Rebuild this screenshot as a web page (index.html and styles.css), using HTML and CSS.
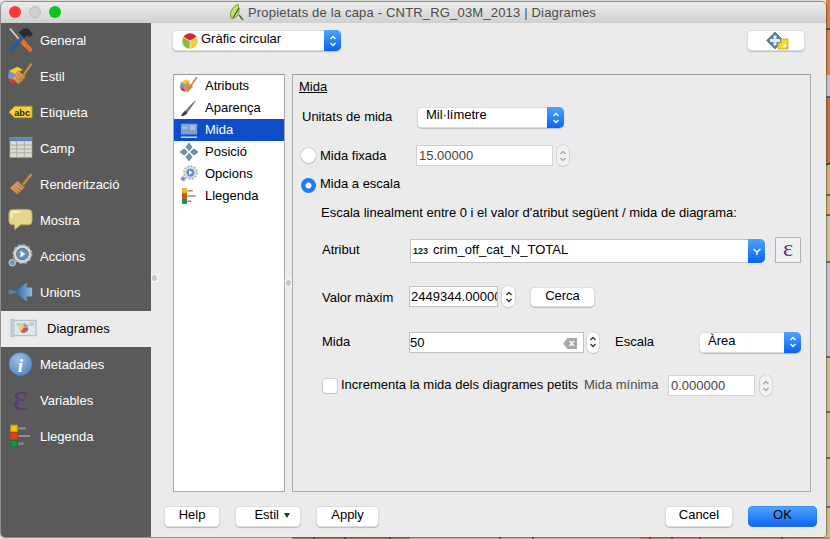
FILE: index.html
```html
<!DOCTYPE html>
<html lang="ca">
<head>
<meta charset="utf-8">
<title>Propietats de la capa</title>
<link rel="stylesheet" href="styles.css">
</head>
<body>
<svg class="defs" width="0" height="0" aria-hidden="true">
  <defs>
    <linearGradient id="wood" x1="0" y1="0" x2="1" y2="1"><stop offset="0" stop-color="#e9b878"/><stop offset="1" stop-color="#b87a3a"/></linearGradient>
    <radialGradient id="infoG" cx=".4" cy=".3" r=".8"><stop offset="0" stop-color="#9dc0e6"/><stop offset="1" stop-color="#4f83bd"/></radialGradient>
    <linearGradient id="arrowG" x1="0" y1="0" x2="1" y2="0"><stop offset="0" stop-color="#2f659f"/><stop offset="1" stop-color="#8fb6e0"/></linearGradient>
    <symbol id="brush" viewBox="0 0 24 24">
      <path d="M15 12 22 3" stroke="#c98a3a" stroke-width="2.4" stroke-linecap="round"/>
      <path d="M9 9 16 15 9 22 2 16Z" fill="url(#wood)" stroke="#9a6a30" stroke-width=".6"/>
      <path d="M6 13l6 5M4.500 15l6 5M8 11l6 5" stroke="#a26d30" stroke-width=".7"/>
    </symbol>
    <symbol id="style" viewBox="0 0 24 24">
      <path d="M1 7 9 3 14 6 5 12Z" fill="#f3c92f"/>
      <path d="M1 7 8 11 5 17 0 14Z" fill="#6f9ad0"/>
      <path d="M0 14 6 16 8 20 2 18Z" fill="#d33b2f"/>
      <path d="M15 11 22 1" stroke="#c98a3a" stroke-width="2.2" stroke-linecap="round"/>
      <path d="M10 7 17 13 10 20 4 14Z" fill="url(#wood)" stroke="#9a6a30" stroke-width=".6"/>
      <path d="M7 12l5 5M9 10l5 5" stroke="#a26d30" stroke-width=".7"/>
    </symbol>
    <symbol id="gear" viewBox="0 0 26 24">
      <circle cx="15" cy="10" r="8" fill="none" stroke="#d8d8d8" stroke-width="3"/>
      <circle cx="15" cy="10" r="9.500" fill="none" stroke="#aaa" stroke-width="2" stroke-dasharray="2.500 2.500"/>
      <circle cx="15" cy="10" r="6" fill="#5f8fc4"/>
      <path d="M13 6.500v7l5-3.500Z" fill="#fff"/>
      <circle cx="4.500" cy="19" r="3.200" fill="#6f94bd" stroke="#bbb" stroke-width="1.400"/>
    </symbol>
    <symbol id="legend" viewBox="0 0 20 24">
      <rect x="1" y="2" width="6" height="6" fill="#f7c400" stroke="#c99a20" stroke-width=".8"/>
      <rect x="1" y="9" width="6" height="6" fill="#e8430c" stroke="#b8400f" stroke-width=".8"/>
      <rect x="1" y="16" width="6" height="6" fill="#0d9b45" stroke="#0f6e35" stroke-width=".8"/>
      <path d="M8 5h7M8 12h11M8 19h5" stroke="#8f8f8f" stroke-width="2"/>
    </symbol>
    <symbol id="mapicon" viewBox="0 0 28 20">
      <rect x="3" y="2" width="24" height="16" fill="#dfe6ea" stroke="#a9b7c2"/>
      <rect x="1" y="1" width="3" height="18" fill="#c9d3da" stroke="#a9b7c2" stroke-width=".7"/>
      <path d="M7 5h6v3H7ZM20 4h5v4h-5Z" fill="#bcd0c2"/>
      <circle cx="14" cy="10" r="5" fill="#e9d17a"/>
      <path d="M14 10V5a5 5 0 0 1 5 5Z" fill="#8aa3d0"/>
      <path d="M14 10h5a5 5 0 0 1-8 4Z" fill="#d25656"/>
    </symbol>
    <symbol id="move" viewBox="0 0 20 20">
      <g fill="#6f8fa8" stroke="#3f6684" stroke-width=".5">
        <path d="M10 0 13.500 4.500 10 8.500 6.500 4.500Z"/>
        <path d="M10 11.500 13.500 15.500 10 20 6.500 15.500Z"/>
        <path d="M0 10 4.500 6.500 8.500 10 4.500 13.500Z"/>
        <path d="M11.500 10 15.500 6.500 20 10 15.500 13.500Z"/>
      </g>
    </symbol>
    <symbol id="updown" viewBox="0 0 12 20">
      <path d="M3.500 8 6 5.500 8.500 8M3.500 12 6 14.500 8.500 12" fill="none" stroke="currentColor" stroke-width="1.300"/>
    </symbol>
  </defs>
</svg>

<svg class="wallpaper" viewBox="0 0 830 539" aria-hidden="true">
  <rect width="830" height="539" fill="#e4e4e4"/>
  <rect x="826" width="4" height="75" fill="#e07f36"/>
  <rect x="826" y="75" width="4" height="22" fill="#c4c4c4"/>
  <rect x="826" y="97" width="4" height="68" fill="#c9702f"/>
  <rect x="826" y="165" width="4" height="50" fill="#cdb56a"/>
  <rect x="826" y="215" width="4" height="47" fill="#c9c68d"/>
  <rect x="826" y="262" width="4" height="95" fill="#c4c4c4"/>
  <rect x="826" y="357" width="4" height="182" fill="#c5c285"/>
  <path d="M826 29h4M826 97h4M826 165l4-2M826 195h4M826 215h4M826 262h4M826 357h4M826 412h4M826 458h4M826 507h4" stroke="#111"/>
  <rect x="292" y="537" width="118" height="2" fill="#9c8646"/>
  <rect x="410" y="537" width="230" height="2" fill="#bdb99a"/>
  <rect x="640" y="537" width="190" height="2" fill="#a59a58"/>
  <path d="M314 537v2M345 537v2M390 537v2M500 537v2M533 537v2M650 537v2M672 537v2M700 537v2M782 537v2" stroke="#111"/>
</svg>

<div class="window">
  <header class="titlebar">
    <div class="lights"><span class="light red"></span><span class="light mute"></span><span class="light green"></span></div>
    <svg class="qgis" viewBox="0 0 16 18" width="16" height="18" aria-hidden="true">
      <path d="M3 15C1 9 5 4 10 1c1 4 2 9-1 12-2 2-4 3-6 2Z" fill="#c3dc6a" stroke="#5b8a24" stroke-width=".8"/>
      <path d="M5 15 11 5M11 12l4 5" stroke="#2f6a1c" stroke-width="1.300" fill="none"/>
    </svg>
    <span class="title">Propietats de la capa - CNTR_RG_03M_2013 | Diagrames</span>
  </header>
  <div class="content">
    <nav class="sidebar">
      <div class="nav-item"><svg class="nav-icon" viewBox="0 0 26 26" aria-hidden="true">
        <path d="M2 1 18 20" stroke="#ddd" stroke-width="1.500"/>
        <path d="M15 14 23 23" stroke="#e8701a" stroke-width="4.500" stroke-linecap="round"/>
        <path d="M3 24 17 8" stroke="#2d5c96" stroke-width="4" stroke-linecap="round"/>
        <path d="M11 5 16 1h5l5 6-3 3-3-2-3 3-4-4Z" fill="#2b2b2b"/>
      </svg><span>General</span></div>
      <div class="nav-item"><svg class="nav-icon"><use href="#style"/></svg><span>Estil</span></div>
      <div class="nav-item"><svg class="nav-icon" viewBox="0 0 26 26" aria-hidden="true">
        <path d="M1 13 7 7H25V19H7Z" fill="#f3d43a" stroke="#b2932a"/>
        <text x="6.500" y="17" class="abc">abc</text>
      </svg><span>Etiqueta</span></div>
      <div class="nav-item"><svg class="nav-icon" viewBox="0 0 26 26" aria-hidden="true">
        <rect x="2" y="2" width="23" height="21" fill="#dcdcd4" stroke="#9a9a92" stroke-width=".6"/>
        <rect x="2" y="2" width="23" height="4" fill="#5f85b5"/>
        <path d="M2 10h23M2 14h23M2 18h23M9 6v17M17 6v17" stroke="#a8a8a0"/>
      </svg><span>Camp</span></div>
      <div class="nav-item"><svg class="nav-icon"><use href="#brush"/></svg><span>Renderització</span></div>
      <div class="nav-item"><svg class="nav-icon" viewBox="0 0 26 26" aria-hidden="true">
        <path d="M5 2H21Q25 2 25 6V14Q25 18 21 18H13L7 23V18H5Q1 18 1 14V6Q1 2 5 2Z" fill="#e4d78c" stroke="#bfa85c"/>
        <path d="M4 11V6Q4 4.500 6 4.500H13" stroke="#fff" stroke-width="1.200" fill="none"/>
      </svg><span>Mostra</span></div>
      <div class="nav-item"><svg class="nav-icon"><use href="#gear"/></svg><span>Accions</span></div>
      <div class="nav-item"><svg class="nav-icon" viewBox="0 0 28 26" aria-hidden="true">
        <circle cx="3" cy="13" r="2.800" fill="#4a7fb5"/>
        <path d="M5 13h5" stroke="#6f9ac8" stroke-width="1.500"/>
        <path d="M8 13 21 2V8H27V18H21V24Z" fill="url(#arrowG)"/>
      </svg><span>Unions</span></div>
      <div class="nav-item active"><svg class="nav-icon"><use href="#mapicon"/></svg><span>Diagrames</span></div>
      <div class="nav-item"><svg class="nav-icon" viewBox="0 0 26 26" aria-hidden="true">
        <circle cx="13" cy="13" r="12" fill="url(#infoG)" stroke="#4473a8" stroke-width=".6"/>
        <text x="13" y="21" class="info-i">i</text>
      </svg><span>Metadades</span></div>
      <div class="nav-item"><span class="eps eps-nav">ε</span><span>Variables</span></div>
      <div class="nav-item"><svg class="nav-icon"><use href="#legend"/></svg><span>Llegenda</span></div>
    </nav>

    <main class="main">
      <div class="toprow">
        <div class="combo combo-type">
          <svg class="pie" viewBox="1 1 14 14" aria-hidden="true">
            <path d="M8 8 2 4.500A7 7 0 0 1 14 4.500Z" fill="#d8232a" stroke="#fff" stroke-width=".4"/>
            <path d="M8 8 14 4.500A7 7 0 0 1 8 15Z" fill="#f3d03c" stroke="#fff" stroke-width=".4"/>
            <path d="M8 8V15A7 7 0 0 1 2 4.500Z" fill="#8db83e" stroke="#fff" stroke-width=".4"/>
          </svg>
          <span class="combo-text up">Gràfic circular</span>
          <span class="stepper"><svg><use href="#updown"/></svg></span>
        </div>
        <button class="btn btn-tool" type="button">
          <svg viewBox="0 0 24 20" width="24" height="20" aria-hidden="true">
            <path d="M9 1 17.500 9.500 9 18 .5 9.500Z" fill="#5d7f9b" stroke="#3f6684" stroke-width=".6"/>
            <path d="M7.500 4.500h3v3.500h3.500v3h-3.500v3.500h-3v-3.500H4v-3h3.500Z" fill="#e4edf3"/>
            <path d="M12 12h3V8h7v10H12Z" fill="#f4d832" stroke="#c9a820" stroke-width=".8"/>
            <rect x="17.500" y="13.500" width="2.500" height="2.500" fill="#fff"/>
          </svg>
        </button>
      </div>

      <div class="workspace">
        <ul class="list">
          <li class="list-item"><svg class="list-icon"><use href="#style"/></svg>Atributs</li>
          <li class="list-item"><svg class="list-icon" viewBox="0 0 20 20" aria-hidden="true">
            <path d="M18 1C14 4 9 9 6 13L3 16C2 18 1 19 1 19 4 19 7 18 9 14 12 10 16 5 18 1Z" fill="#777"/>
            <path d="M6 13C4 14 3 16 1 19 4 19 7 18 8 15Z" fill="#444"/>
          </svg>Aparença</li>
          <li class="list-item selected"><svg class="list-icon" viewBox="0 0 20 20" aria-hidden="true">
            <rect x="1" y="3" width="18" height="12" fill="#7f9fd0"/>
            <path d="M3 6h5v3H3ZM11 5h6v5h-6Z" fill="#a9bfe2"/>
            <path d="M1 18h18" stroke="#c9d6ea" stroke-width="1.500"/>
          </svg>Mida</li>
          <li class="list-item"><svg class="list-icon"><use href="#move"/></svg>Posició</li>
          <li class="list-item"><svg class="list-icon"><use href="#gear"/></svg>Opcions</li>
          <li class="list-item"><svg class="list-icon"><use href="#legend"/></svg>Llegenda</li>
        </ul>
        <div class="handle"><span class="dot"></span></div>
        <section class="panel">
          <div class="group-title">Mida</div>

          <div class="row row-units">
            <label class="lbl lift2 w-units">Unitats de mida</label>
            <div class="combo combo-units"><span class="combo-text up2">Mil·límetre</span><span class="stepper"><svg><use href="#updown"/></svg></span></div>
          </div>

          <div class="row row-fixed">
            <span class="radio"></span>
            <label class="lbl w-fixed">Mida fixada</label>
            <div class="field dim w-137">15.00000</div>
            <span class="spin dim-spin"><svg><use href="#updown"/></svg></span>
          </div>

          <div class="row row-scaled">
            <span class="radio on"></span>
            <label class="lbl lift3">Mida a escala</label>
          </div>

          <div class="desc">Escala linealment entre 0 i el valor d'atribut següent / mida de diagrama:</div>

          <div class="row row-attr">
            <label class="lbl lift2 w-attr">Atribut</label>
            <div class="combo combo-attr">
              <span class="num">123</span><span class="attr-name">crim_off_cat_N_TOTAL</span>
              <span class="stepper stepper-down"><svg viewBox="0 0 12 12" width="12" height="12" aria-hidden="true"><path d="M2.500 4 6 7 9.500 4M6 7v3" fill="none" stroke="#fff" stroke-width="1.400"/></svg></span>
            </div>
            <button class="eps-btn" type="button"><span class="eps">ε</span></button>
          </div>

          <div class="row row-max">
            <label class="lbl drop1 w-max">Valor màxim</label>
            <div class="field w-89 clip"><span class="clip-text">2449344.00000</span></div>
            <span class="spin w-13"><svg><use href="#updown"/></svg></span>
            <button class="btn btn-search" type="button">Cerca</button>
          </div>

          <div class="row row-size">
            <label class="lbl lift1 w-max">Mida</label>
            <div class="field w-175">50
              <svg class="clear" viewBox="0 0 14 11" width="14" height="11" aria-hidden="true">
                <path d="M0 5.500 4.500 0H14V11H4.500Z" fill="#a8a8a8"/>
                <path d="M6.500 3 11 8M11 3 6.500 8" stroke="#fff" stroke-width="1.300"/>
              </svg>
            </div>
            <span class="spin spin-gap3"><svg><use href="#updown"/></svg></span>
            <label class="lbl lift1 w-scale">Escala</label>
            <div class="combo combo-scale"><span class="combo-text">Àrea</span><span class="stepper"><svg><use href="#updown"/></svg></span></div>
          </div>

          <div class="row row-inc">
            <span class="check"></span>
            <label class="lbl lift3 w-inc">Incrementa la mida dels diagrames petits</label>
            <label class="lbl lift3 w-min grey">Mida mínima</label>
            <div class="field dim w-87">0.000000</div>
            <span class="spin dim-spin spin-gap5"><svg><use href="#updown"/></svg></span>
          </div>
        </section>
      </div>

      <footer class="footer">
        <button class="btn btn-help" type="button">Help</button>
        <button class="btn btn-style" type="button">Estil <i class="caret"></i></button>
        <button class="btn btn-apply" type="button">Apply</button>
        <button class="btn btn-cancel" type="button">Cancel</button>
        <button class="btn btn-ok" type="button">OK</button>
      </footer>
    </main>
    <div class="handle handle-side"><span class="dot"></span></div>
  </div>
</div>
</body>
</html>
```
FILE: styles.css
```css
* { box-sizing: border-box; }
html, body { margin: 0; height: 100%; }
body {
  position: relative;
  width: 830px;
  height: 539px;
  overflow: hidden;
  font-family: "Liberation Sans", Arial, sans-serif;
  font-size: 13px;
  color: #000;
}
.defs { position: absolute; }
.wallpaper { position: absolute; left: 0; top: 0; width: 830px; height: 539px; }

.window {
  position: absolute;
  left: 1px;
  top: 2px;
  width: 825px;
  height: 535px;
  display: flex;
  flex-direction: column;
  background: #ebebeb;
  border-radius: 5px 5px 4px 4px;
  overflow: hidden;
  box-shadow: 0 0 1px 1px rgba(60, 60, 60, .55);
}

.titlebar {
  position: relative;
  height: 21px;
  flex: none;
  display: flex;
  align-items: center;
  justify-content: center;
  gap: 4px;
  padding-right: 3px;
  background: linear-gradient(#ececec, #d2d2d2);
  border-bottom: 1px solid #cfcfcf;
}
.lights { position: absolute; left: 8px; top: 4px; display: flex; gap: 8px; }
.light { width: 12px; height: 12px; border-radius: 50%; }
.red { background: #fc3b39; }
.mute { background: #cfcfcf; border: 1px solid #bdbdbd; }
.green { background: #0cc71f; }
.qgis { flex: none; }
.title { color: #4c4c4c; font-size: 13px; letter-spacing: .18px; }

.content { flex: 1; display: flex; position: relative; min-height: 0; }
.sidebar { width: 150px; flex: none; background: #5a5a5a; }
.nav-item {
  height: 36px;
  display: flex;
  align-items: center;
  gap: 7px;
  padding-left: 7px;
  padding-bottom: 2px;
  color: #fff;
}
.nav-icon { width: 25px; height: 26px; flex: none; }
.nav-item.active { background: #ebebeb; color: #000; padding-left: 9px; gap: 10px; }
.nav-item.active .nav-icon { width: 27px; height: 20px; }
.abc { font: bold 9.500px "Liberation Sans", Arial, sans-serif; fill: #222; }
.info-i { font: italic bold 20px "Liberation Serif", serif; fill: #fff; text-anchor: middle; }
.eps {
  font-family: "Liberation Serif", serif;
  color: #5a3a78;
  line-height: 1;
}
.eps-nav { width: 25px; height: 26px; line-height: 20px; flex: none; font-size: 38px; text-align: center; }

.main { flex: 1; min-width: 0; padding: 7px 9px 0 13px; display: flex; flex-direction: column; }
.toprow { display: flex; justify-content: space-between; height: 21px; margin: 0 12px 0 8px; flex: none; }
.workspace { display: flex; height: 418px; margin: 23px 6px 0 9px; flex: none; }

.combo {
  position: relative;
  display: flex;
  align-items: center;
  height: 21px;
  background: #fff;
  border-radius: 5px;
  box-shadow: inset 0 0 0 .5px #bdbdbd, 0 1px 1px rgba(0, 0, 0, .2);
}
.combo-text { padding-bottom: 3px; }
.combo-text.up { padding-bottom: 5px; }
.combo-text.up2 { padding-bottom: 6px; }
.combo-type { width: 169px; padding-left: 10px; }
.pie { width: 16px; height: 16px; flex: none; margin-right: 3px; }
.combo-units { width: 147px; padding-left: 9px; }
.combo-scale { width: 102px; height: 21px; padding-left: 9px; }
.combo-attr { width: 355px; height: 24px; padding-left: 3px; margin-top: 2px; border-radius: 0 5px 5px 0; box-shadow: inset 0 0 0 1px #c4c4c4; }
.stepper {
  position: absolute;
  right: 0;
  top: 0;
  bottom: 0;
  width: 17px;
  display: flex;
  align-items: center;
  justify-content: center;
  color: #fff;
  background: linear-gradient(#4da3fd, #0a62f4);
  border-radius: 0 5px 5px 0;
}
.stepper svg { width: 12px; height: 20px; }
.stepper-down svg { width: 12px; height: 12px; }
.num { font-size: 9px; font-weight: bold; color: #222; margin-right: 5px; }
.attr-name { padding-bottom: 4px; }

.btn {
  font: inherit;
  color: #000;
  height: 21px;
  padding: 0 0 4px;
  background: #fff;
  border: 0;
  border-radius: 5px;
  box-shadow: inset 0 0 0 .5px #bdbdbd, 0 1px 1px rgba(0, 0, 0, .2);
}
.btn-tool { width: 58px; display: flex; align-items: center; justify-content: center; padding: 0 0 0 4px; }

.list {
  list-style: none;
  margin: 0;
  padding: 0;
  width: 112px;
  flex: none;
  background: #fff;
  border: 1px solid #aaa;
  border-top-color: #999;
}
.list-item { height: 22px; display: flex; align-items: center; gap: 7px; padding-left: 6px; padding-bottom: 1px; }
.list-item.selected { background: #0d4dc8; color: #fff; }
.list-icon { width: 18px; height: 18px; flex: none; }

.handle { width: 7px; flex: none; position: relative; }
.dot {
  position: absolute;
  left: 0;
  top: 205px;
  width: 7px;
  height: 8px;
  background: #f6f6f6;
}
.dot::after {
  content: "";
  position: absolute;
  left: 1px;
  top: 1px;
  width: 5px;
  height: 6px;
  border-radius: 50%;
  background: #c6c6c6;
}
.handle-side { position: absolute; left: 150px; top: 0; height: 100%; }
.handle-side .dot { top: 251px; }

.panel {
  width: 519px;
  flex: none;
  border: 1px solid #aaa;
  border-top-color: #999;
  display: flex;
  flex-direction: column;
}
.group-title { margin: 4px 0 0 6px; line-height: 15px; height: 15px; text-decoration: underline; }
.row { display: flex; align-items: center; flex: none; }
.lbl { flex: none; display: block; }
.lift1 { padding-bottom: 1px; }
.lift2 { padding-bottom: 2px; }
.lift3 { padding-bottom: 3px; }
.drop1 { padding-top: 1px; }
.row-units { height: 21px; margin-top: 13px; padding-left: 9px; }
.row-fixed { height: 21px; margin-top: 17px; padding-left: 8px; }
.row-scaled { height: 20px; margin-top: 9px; padding-left: 8px; }
.desc { height: 16px; line-height: 16px; margin: 10px 0 0 28px; white-space: nowrap; }
.row-attr { height: 26px; margin-top: 16px; padding-left: 29px; }
.row-max { height: 21px; margin-top: 23px; padding-left: 29px; }
.row-size { height: 22px; margin-top: 24px; padding-left: 29px; }
.row-inc { height: 21px; margin-top: 22px; padding-left: 30px; }

.w-units { width: 115px; }
.w-fixed { width: 96px; }
.w-attr { width: 88px; }
.w-max { width: 87px; }
.w-scale { width: 84px; margin-left: 16px; }
.w-inc { width: 243px; }
.w-min { width: 84px; }
.grey { color: #4a4a4a; }

.radio {
  width: 15px;
  height: 15px;
  flex: none;
  margin-right: 4px;
  border-radius: 50%;
  background: #fff;
  box-shadow: 0 0 0 .5px #b0b0b0, 0 1px 1px rgba(0, 0, 0, .15);
}
.radio.on {
  background: radial-gradient(circle, #fff 0 2.500px, #1b7cf8 3.500px);
  box-shadow: none;
}
.check {
  width: 14px;
  height: 14px;
  flex: none;
  margin-right: 4px;
  border-radius: 3px;
  background: #fff;
  box-shadow: 0 0 0 .5px #b0b0b0, 0 1px 1px rgba(0, 0, 0, .15);
}

.field {
  position: relative;
  flex: none;
  height: 21px;
  line-height: 19px;
  padding-left: 2px;
  background: #fff;
  border: 1px solid #bfbfbf;
  white-space: nowrap;
}
.clip { overflow: hidden; line-height: 20px; }
.clip-text { display: inline-block; }
.dim { color: #444; border-color: #d2d2d2; padding-left: 2px; }
.w-137 { width: 137px; padding-left: 2px; }
.w-89 { width: 89px; padding-left: 1px; }
.w-175 { width: 175px; padding-left: 0; }
.w-87 { width: 87px; }
.clear { position: absolute; right: 6px; top: 5px; }

.spin {
  flex: none;
  width: 12px;
  height: 21px;
  margin-left: 4px;
  display: flex;
  align-items: center;
  justify-content: center;
  color: #333;
  background: #fff;
  border-radius: 6px;
  box-shadow: 0 0 0 .5px #c2c2c2, 0 1px 1px rgba(0, 0, 0, .12);
}
.spin svg { width: 12px; height: 20px; }
.dim-spin { color: #a5a5a5; background: #f2f2f2; }
.spin-gap3 { margin-left: 3px; }
.spin-gap5 { margin-left: 5px; }
.w-13 { width: 13px; }

.eps-btn {
  width: 26px;
  height: 26px;
  padding: 0 0 5px;
  margin-left: 10px;
  display: flex;
  align-items: center;
  justify-content: center;
  background: #f0f0f0;
  border: 1px solid #b4b4b4;
}
.eps-btn .eps { font-size: 24px; }

.btn-search { width: 65px; height: 20px; margin-left: 15px; padding-bottom: 2px; }

.footer { display: flex; margin-top: 14px; flex: none; height: 21px; }
.btn-help { width: 56px; }
.btn-style { width: 66px; margin-left: 15px; padding-left: 8px; }
.btn-apply { width: 63px; margin-left: 15px; }
.btn-cancel { width: 68px; margin-left: 286px; }
.btn-ok {
  width: 69px;
  margin-left: 15px;
  background: linear-gradient(#52a6fd, #0a62f4);
  box-shadow: inset 0 0 0 .5px #2a78e8;
}
.caret {
  display: inline-block;
  width: 0;
  height: 0;
  margin-left: 1px;
  vertical-align: 1px;
  border-left: 3.500px solid transparent;
  border-right: 3.500px solid transparent;
  border-top: 5px solid #333;
}
```
